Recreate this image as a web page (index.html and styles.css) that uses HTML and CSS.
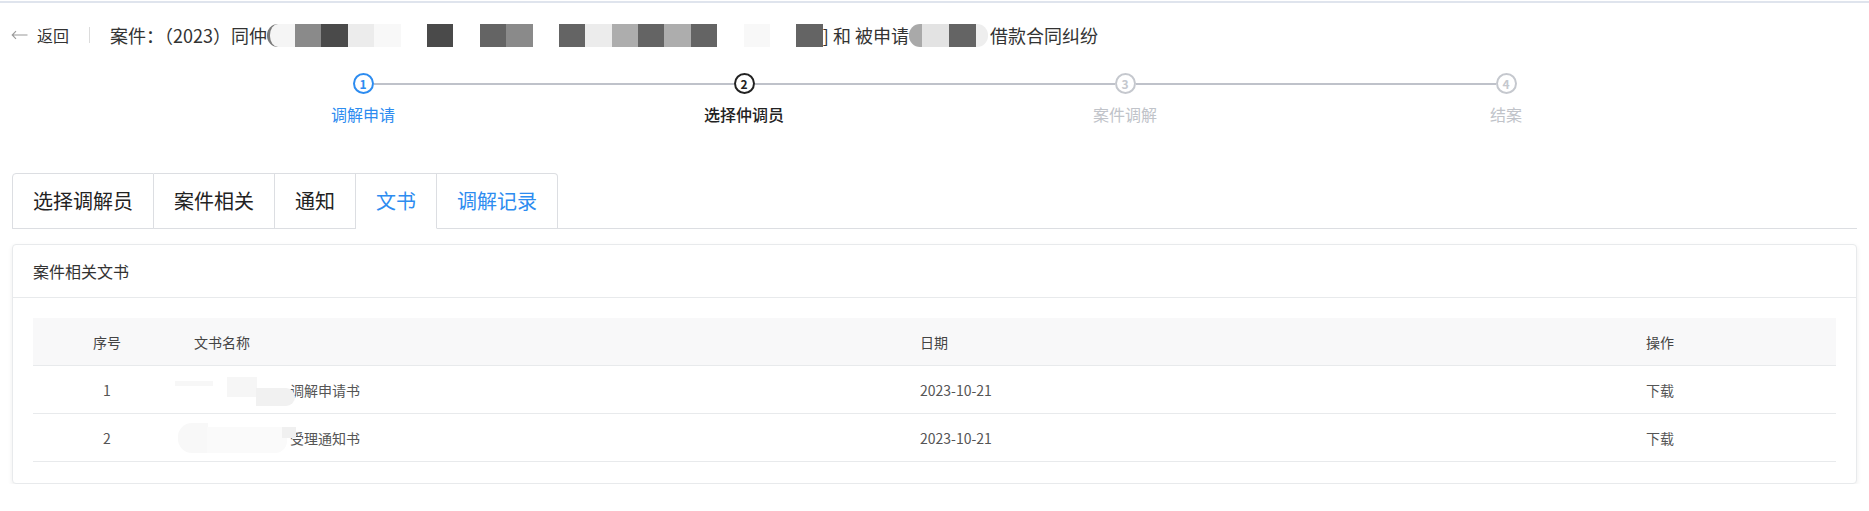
FILE: index.html
```html
<!DOCTYPE html>
<html lang="zh-CN">
<head>
<meta charset="utf-8">
<title>案件详情</title>
<link rel="stylesheet" href="styles.css">
</head>
<body>
<div class="topline"></div>
<header class="header">
  <a class="back">
    <svg class="back-icon" width="17" height="10" viewBox="0 0 17 10"><path d="M16.5 5H1.2M5 1.2L1.2 5 5 8.8" fill="none" stroke="#9a9a9a" stroke-width="1.1"/></svg>
    <span>返回</span>
  </a>
  <span class="divider"></span>
  <h1 class="title">案件：（2023）同仲<span class="mosaic m-a"><i class="b first g-l"></i><i class="b g4"></i><i class="b g6"></i><i class="b g2"></i><i class="b g1"></i><i class="b gw"></i><i class="b g6"></i><i class="b gw"></i><i class="b g5"></i><i class="b g4"></i><i class="b gw"></i><i class="b g5"></i><i class="b g2"></i><i class="b g3"></i><i class="b g5"></i><i class="b g3"></i><i class="b g5"></i><i class="b gw"></i><i class="b g1"></i><i class="b gw"></i><i class="b g5"></i></span>] 和 被申请<span class="mosaic m-b"><i class="b cap-l"></i><i class="b g2b"></i><i class="b g5"></i><i class="b cap-r"></i></span>借款合同纠纷</h1>
</header>

<div class="steps">
  <div class="step done">
    <div class="step-head"><span class="tail none"></span><span class="circle">1</span><span class="tail"></span></div>
    <div class="step-title">调解申请</div>
  </div>
  <div class="step current">
    <div class="step-head"><span class="tail"></span><span class="circle">2</span><span class="tail"></span></div>
    <div class="step-title">选择仲调员</div>
  </div>
  <div class="step wait">
    <div class="step-head"><span class="tail"></span><span class="circle">3</span><span class="tail"></span></div>
    <div class="step-title">案件调解</div>
  </div>
  <div class="step wait">
    <div class="step-head"><span class="tail"></span><span class="circle">4</span><span class="tail none"></span></div>
    <div class="step-title">结案</div>
  </div>
</div>

<nav class="tabs">
  <div class="tab">选择调解员</div>
  <div class="tab">案件相关</div>
  <div class="tab">通知</div>
  <div class="tab blue active">文书</div>
  <div class="tab blue">调解记录</div>
</nav>

<section class="card">
  <div class="card-head">案件相关文书</div>
  <div class="card-body">
    <div class="table">
      <div class="row thead">
        <div class="cell center">序号</div>
        <div class="cell">文书名称</div>
        <div class="cell">日期</div>
        <div class="cell">操作</div>
      </div>
      <div class="row">
        <div class="cell center">1</div>
        <div class="cell name"><span class="prefix"></span>调解申请书<i class="mask k1"></i><i class="mask k2"></i><i class="mask k3"></i></div>
        <div class="cell">2023-10-21</div>
        <div class="cell">下载</div>
      </div>
      <div class="row">
        <div class="cell center">2</div>
        <div class="cell name"><span class="prefix"></span>受理通知书<i class="mask k4"></i><i class="mask k5"></i><i class="mask k6"></i></div>
        <div class="cell">2023-10-21</div>
        <div class="cell">下载</div>
      </div>
    </div>
  </div>
</section>
</body>
</html>
```

FILE: styles.css
```css
* { box-sizing: border-box; }
html, body { margin: 0; padding: 0; background: #fff; }
body {
  font-family: "Noto Sans CJK SC", "Noto Sans", sans-serif;
  color: #333;
  width: 1869px;
}

.topline {
  height: 2px;
  margin-top: 1px;
  background: #dfe4ed;
}

/* header */
.header {
  height: 64px;
  display: flex;
  align-items: center;
  padding-left: 11px;
}
.back {
  display: flex;
  align-items: center;
  font-size: 16px;
  color: #333;
}
.back-icon { margin-right: 9px; }
.divider {
  width: 1px;
  height: 16px;
  background: #dcdcdc;
  margin: 0 20px 0 20px;
}
.title {
  margin: 0;
  font-size: 18px;
  font-weight: 400;
  color: #333;
  display: flex;
  align-items: center;
  white-space: pre;
}
.mosaic {
  display: flex;
  height: 23px;
}
.mosaic .b { display: block; width: 26.4px; height: 100%; flex: none; }
.mosaic .first { width: 28px; border-radius: 11px 0 0 11px; border-left: 3px solid #7a7a7a; }
.g-l { background: #f5f5f5; }
.g1 { background: #f8f8f8; }
.g2 { background: #ececec; }
.g2b { background: #e3e3e3; }
.g3 { background: #adadad; }
.g4 { background: #8a8a8a; }
.g5 { background: #646464; }
.g6 { background: #4a4a4a; }
.gw { background: #fff; }
.mosaic .cap-l { width: 13px; background: #a9a9a9; border-radius: 11px 0 0 11px; }
.mosaic .cap-r { width: 12px; background: #eeeeee; border-radius: 0 11px 11px 0; }
.m-b .g2b, .m-b .g5 { width: 27px; }
.m-b { margin: 0 2px 0 0; }

/* steps */
.steps {
  display: flex;
  width: 1524px;
  margin: 6px auto 0;
}
.step {
  flex: 1;
  display: flex;
  flex-direction: column;
  align-items: center;
}
.step-head {
  width: 100%;
  display: flex;
  align-items: center;
}
.tail {
  flex: 1;
  height: 2px;
  background: #bfc2ca;
}
.tail.none { background: transparent; }
.circle {
  width: 21px;
  height: 21px;
  border: 2px solid #c5c8ce;
  border-radius: 50%;
  display: flex;
  align-items: center;
  justify-content: center;
  font-size: 12px;
  font-weight: 700;
  line-height: 1;
  color: #c5c8ce;
}
.step-title {
  margin-top: 9px;
  font-size: 16px;
  line-height: 22px;
  color: #c0c3c9;
}
.step.done .circle { border-color: #2d8cf0; color: #2d8cf0; }
.step.done .step-title { color: #2d8cf0; }
.step.current .circle { border-color: #222; color: #222; }
.step.current .step-title { color: #222; font-weight: 500; }

/* tabs */
.tabs {
  display: flex;
  margin: 48px 12px 0;
  border-bottom: 1px solid #dcdee2;
}
.tab {
  height: 56px;
  line-height: 54px;
  padding: 0 20px;
  font-size: 20px;
  color: #222;
  background: #fff;
  border: 1px solid #dcdee2;
  border-left: none;
  margin-bottom: -1px;
}
.tab:first-child { border-left: 1px solid #dcdee2; border-top-left-radius: 4px; }
.tab:last-child { border-top-right-radius: 4px; }
.tab.blue { color: #2d8cf0; }
.tab.active { border-bottom-color: #fff; }

/* card */
.card {
  margin: 15px 12px 0;
  border: 1px solid #e8eaec;
  border-radius: 4px;
  background: #fff;
  box-shadow: 0 2px 5px rgba(0, 0, 0, 0.07);
}
.card-head {
  height: 53px;
  padding: 0 20px;
  display: flex;
  align-items: center;
  font-size: 16px;
  color: #333;
  border-bottom: 1px solid #e8eaec;
}
.card-body { padding: 20px 20px 21px; }

.table { font-size: 14px; color: #555; }
.row {
  display: grid;
  grid-template-columns: 148px 1fr 1fr 203px;
  height: 48px;
  border-bottom: 1px solid #e8eaec;
}
.row.thead { background: #f8f8f9; color: #444; }
.cell {
  display: flex;
  align-items: center;
  padding: 0 13px;
  white-space: nowrap;
}
.cell.center { justify-content: center; }
.cell.name { position: relative; }
.prefix { display: inline-block; width: 96px; }
.mask { position: absolute; display: block; }
.k1 { left: -6px; top: 15px; width: 38px; height: 5px; background: #f7f7f7; }
.k2 { left: 46px; top: 11px; width: 30px; height: 20px; background: #f6f6f6; }
.k3 { left: 75px; top: 22px; width: 39px; height: 18px; background: #f1f1f1; border-radius: 0 9px 9px 0; }
.k4 { left: -3px; top: 9px; width: 30px; height: 30px; background: #f8f8f8; border-radius: 14px 0 0 14px; }
.k5 { left: 26px; top: 13px; width: 80px; height: 26px; background: #fafafa; border-radius: 0 0 12px 0; }
.k6 { left: 101px; top: 13px; width: 14px; height: 11px; background: #f0f0f0; }
```
